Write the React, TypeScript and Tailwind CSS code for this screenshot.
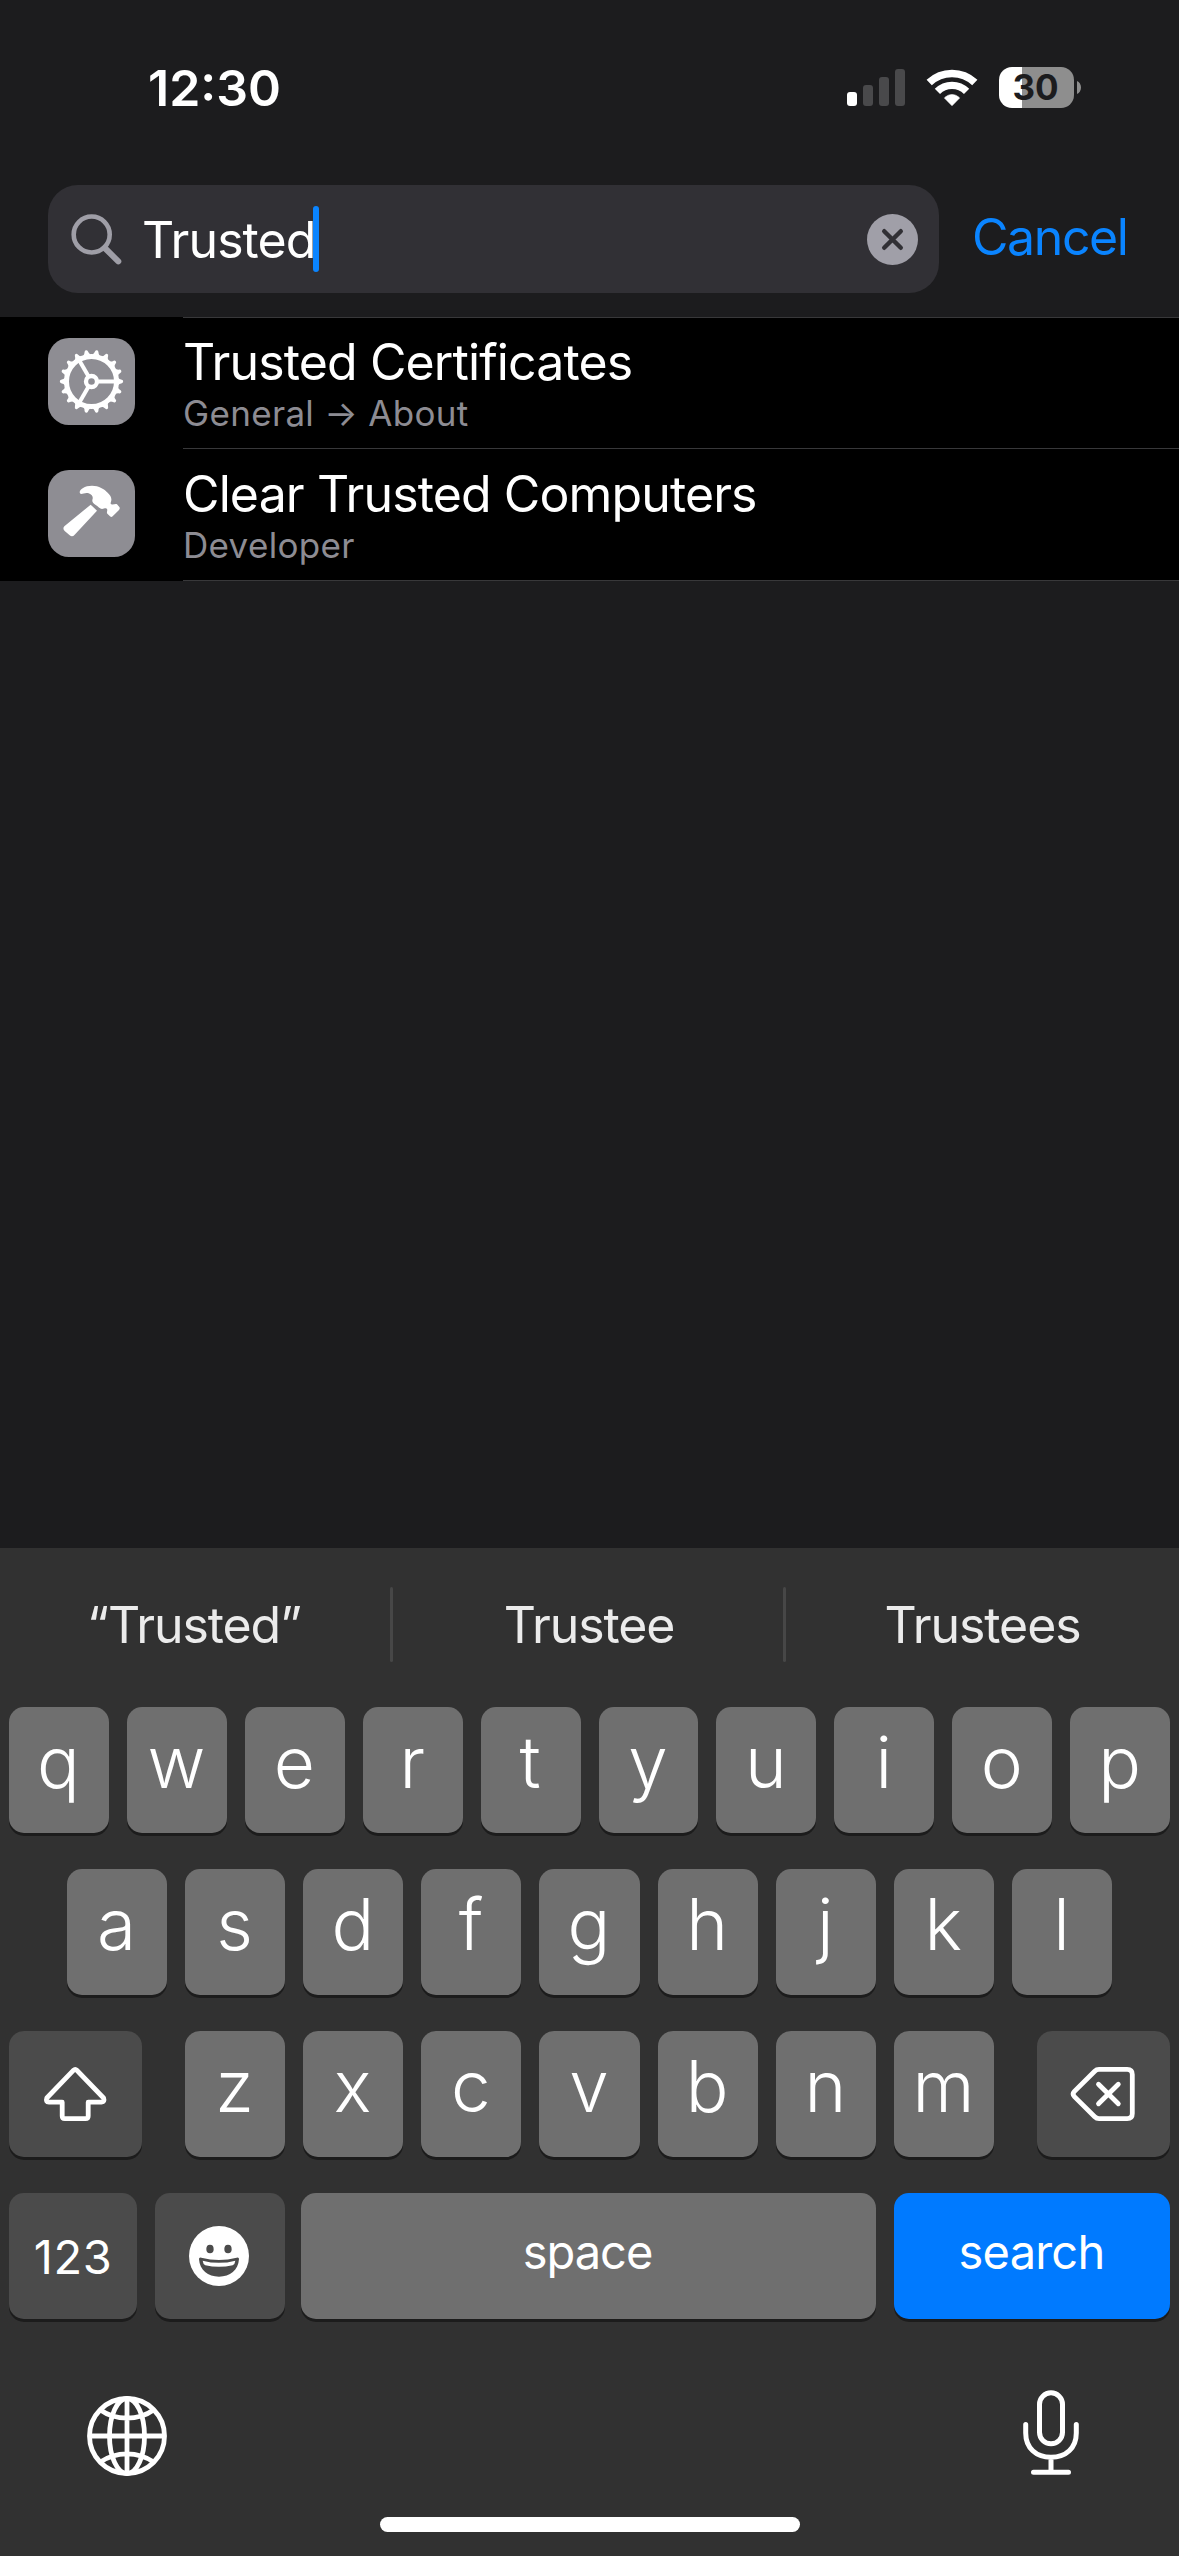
import type { ReactNode } from 'react';

function SignalBars() {
  return (
    <div className="flex h-[37px] items-end gap-[6px]">
      <div className="h-[14px] w-[10px] rounded-[3px] bg-white" />
      <div className="h-[21px] w-[10px] rounded-[3px] bg-[#49494b]" />
      <div className="h-[29px] w-[10px] rounded-[3px] bg-[#49494b]" />
      <div className="h-[37px] w-[10px] rounded-[3px] bg-[#49494b]" />
    </div>
  );
}

function WifiIcon() {
  return (
    <svg width="52" height="37" viewBox="0 0 52 37" fill="none">
      <path d="M3.2 13.6A33.2 33.2 0 0 1 48.8 13.6" stroke="#fff" strokeWidth="7.6" />
      <path d="M11.4 22.4A20.6 20.6 0 0 1 40.6 22.4" stroke="#fff" strokeWidth="7.4" />
      <path d="M26 36.8L18.3 28.9Q21.6 25.4 26 25.4T33.7 28.9Z" fill="#fff" stroke="#fff" strokeWidth="0.5" strokeLinejoin="round" />
    </svg>
  );
}

function Battery() {
  return (
    <div className="flex items-center gap-[3px]">
      <div className="flex h-[41px] w-[75px] items-center justify-center rounded-[13px] bg-[linear-gradient(to_right,#fff_23px,#8e8e8e_23px)] pr-[2px] text-[35px] leading-none font-[650] text-[#1c1c1e]">
        <span>30</span>
      </div>
      <svg width="4" height="13" viewBox="0 0 4 13">
        <path d="M0 0C2.5 1 4 3.6 4 6.5S2.5 12 0 13Z" fill="#8e8e8e" />
      </svg>
    </div>
  );
}

function MagnifierIcon() {
  return (
    <svg width="51" height="51" viewBox="0 0 51 51" fill="none" stroke="#9f9ea7" strokeLinecap="round">
      <circle cx="20.7" cy="20.5" r="18" strokeWidth="4.6" />
      <path d="M33.8 34L47.3 47.4" strokeWidth="6" />
    </svg>
  );
}

function ClearIcon() {
  return (
    <svg width="51" height="51" viewBox="0 0 51 51">
      <circle cx="25.5" cy="25.5" r="25.5" fill="#a09fa8" />
      <path d="M17.2 17.2L33.8 33.8M33.8 17.2L17.2 33.8" stroke="#313035" strokeWidth="4.4" strokeLinecap="round" />
    </svg>
  );
}

const toothAngles = Array.from({ length: 18 }, (_, i) => i * 20);

function GearIcon() {
  return (
    <svg width="87" height="87" viewBox="-130.5 -130.5 261 261">
      <g fill="none" stroke="#fff">
        <circle r="75" strokeWidth="15" />
        <circle r="16.5" strokeWidth="13" />
        {[0, 120, 240].map((a) => (
          <path key={a} d="M20 0H72" strokeWidth="12" transform={`rotate(${a})`} />
        ))}
      </g>
      {toothAngles.map((a) => (
        <path key={a} d="M78 -13Q84 -6 91 -5Q95 -4 95 0Q95 4 91 5Q84 6 78 13Z" fill="#fff" transform={`rotate(${a})`} />
      ))}
    </svg>
  );
}

function HammerIcon() {
  return (
    <svg width="87" height="87" viewBox="144 510 261 261" fill="#fff">
      <path d="M272 614L291 632L224 704Q217 712 209 706L194 693Q187 686 193 679Z" />
      <path d="M239 577C239 568 254 557 276 557C297 557 313 567 323 578C331 586 335 592 334 601C333 608 330 611 334 613C340 616 346 610 351 613L358 621Q361 625 357 630L338 649Q334 653 330 649L322 641C318 635 325 630 320 626C316 623 312 627 306 627C300 626 294 619 286 614C278 609 275 604 278 596C279 589 276 584 266 580C256 577 250 582 244 582Q239 582 239 577Z" />
    </svg>
  );
}

function ShiftIcon() {
  return (
    <svg width="65" height="56" viewBox="0 0 65 56" fill="none" stroke="#fff" strokeWidth="4.8" strokeLinejoin="round">
      <path d="M30.6 4.2Q32.2 2.6 33.8 4.2L60.6 32Q62 36 58.5 36.2H45.2V50Q45.2 52.6 42.6 52.6H21.8Q19.2 52.6 19.2 50V36.2H6Q2.4 36 3.8 32Z" />
    </svg>
  );
}

function DeleteIcon() {
  return (
    <svg width="66" height="56" viewBox="0 0 66 56" fill="none" stroke="#fff" strokeWidth="4.8" strokeLinecap="round" strokeLinejoin="round">
      <path d="M29 3.4H57.2Q62.3 3.4 62.3 8.5V47.5Q62.3 52.6 57.2 52.6H29Q26.5 52.6 24.7 50.8L4.4 30.6Q1.9 28 4.4 25.4L24.7 5.2Q26.5 3.4 29 3.4Z" />
      <path d="M28.5 18.2L48.3 37.8M48.3 18.2L28.5 37.8" />
    </svg>
  );
}

function EmojiIcon() {
  return (
    <svg width="60" height="60" viewBox="27 33 180 180">
      <circle cx="117" cy="123" r="90" fill="#fff" />
      <ellipse cx="90" cy="102" rx="11" ry="13" fill="#4b4b4b" />
      <ellipse cx="144" cy="102" rx="11" ry="13" fill="#4b4b4b" />
      <path d="M57 132Q57 126 64 128Q117 142 170 128Q177 126 177 132C175 165 150 185 117 185S59 165 57 132Z" fill="#4b4b4b" />
      <path d="M68 137Q117 150 166 137Q165 147 158 151Q117 160 76 151Q69 147 68 137Z" fill="#fff" />
    </svg>
  );
}

function GlobeIcon() {
  return (
    <svg width="80" height="80" viewBox="-40 -40 80 80" fill="none" stroke="#fff" strokeWidth="4.8">
      <circle r="37.5" />
      <ellipse rx="17.5" ry="37.5" />
      <path d="M0 -38V38M-38 0H38M-26.5 -26Q-15 -17.8 0 -17.8T26.5 -26M-26.5 26Q-15 17.8 0 17.8T26.5 26" />
    </svg>
  );
}

function MicIcon() {
  return (
    <svg width="56" height="86" viewBox="0 0 56 86" fill="none" stroke="#fff" strokeWidth="5" strokeLinecap="round">
      <rect x="16.5" y="2.8" width="23" height="51" rx="11.5" />
      <path d="M2.7 34.5V43C2.7 58 13 67.2 28 67.2S53.3 58 53.3 43V34.5M28 67.5V82M10.5 82.3H45.5" />
    </svg>
  );
}

function ResultRow({ icon, title, subtitle }: { icon: ReactNode; title: string; subtitle: string }) {
  return (
    <div className="flex h-[132px] pl-12">
      <div className="mt-[21px] h-[87px] w-[87px] shrink-0 rounded-[21px] bg-[#8e8d93]">{icon}</div>
      <div className="ml-12 flex-1 border-b border-[#38383a] pt-[15px]">
        <div className="text-[50px] leading-[60px] tracking-[-0.88px] text-white">{title}</div>
        <div className="text-[35px] leading-[42px] tracking-[0.32px] text-[#8d8c93]">{subtitle}</div>
      </div>
    </div>
  );
}

function Key({ children, className }: { children: ReactNode; className: string }) {
  return (
    <div className={`flex h-[126px] items-center justify-center rounded-[15px] text-white shadow-[0_3px_0_#1c1c1c] ${className}`}>
      {children}
    </div>
  );
}

function Letters({ letters }: { letters: string }) {
  return (
    <div className="flex flex-1 gap-[18px]">
      {letters.split('').map((l) => (
        <Key key={l} className="flex-1 basis-0 bg-[#6f6f6f] pr-[1px] pb-4 text-[71px] leading-none font-[340]">
          {l}
        </Key>
      ))}
    </div>
  );
}

function Keyboard() {
  return (
    <div className="flex h-[1008px] flex-col bg-[#313131]">
      <div className="flex h-[159px] items-center pb-[6px] text-center text-[50px] leading-[60px] tracking-[-1.1px] text-[#ebebeb]">
        <div className="w-[390px] pr-[2px]">“Trusted”</div>
        <div className="h-[75px] w-[3px] rounded-full bg-[#474747]" />
        <div className="w-[390px] pl-[2px]">Trustee</div>
        <div className="h-[75px] w-[3px] rounded-full bg-[#474747]" />
        <div className="flex-1">Trustees</div>
      </div>
      <div className="flex flex-col gap-9 px-[9px]">
        <div className="flex">
          <Letters letters="qwertyuiop" />
        </div>
        <div className="flex px-[58px]">
          <Letters letters="asdfghjkl" />
        </div>
        <div className="flex gap-[43px]">
          <Key className="w-[133px] bg-[#4b4b4b] pr-[1px]">
            <ShiftIcon />
          </Key>
          <Letters letters="zxcvbnm" />
          <Key className="w-[133px] bg-[#4b4b4b] pr-[1px]">
            <DeleteIcon />
          </Key>
        </div>
        <div className="flex text-[47px] leading-none">
          <Key className="w-[128px] bg-[#4b4b4b] tracking-[0.6px]">123</Key>
          <Key className="ml-[18px] w-[130px] bg-[#4b4b4b] pr-[2px]">
            <EmojiIcon />
          </Key>
          <Key className="ml-4 w-[575px] bg-[#6f6f6f] pr-[2px] pb-[9px] tracking-[-1px]">space</Key>
          <Key className="ml-[18px] flex-1 bg-[#007aff] pr-[1px] pb-[9px] tracking-[-0.8px]">search</Key>
        </div>
      </div>
      <div className="flex flex-1 items-start justify-between pr-[100px] pl-[87px]">
        <div className="mt-[77px]">
          <GlobeIcon />
        </div>
        <div className="mt-[71px]">
          <MicIcon />
        </div>
      </div>
      <div className="mb-6 h-[15px] w-[420px] self-center rounded-full bg-white" />
    </div>
  );
}

export default function App() {
  return (
    <div className="flex h-[2556px] w-[1179px] flex-col overflow-hidden bg-[#1c1c1e] font-['Inter',sans-serif]">
      <div className="flex h-[175px] items-center pr-[98px] pl-[148px]">
        <div className="text-[50px] leading-[60px] font-semibold text-white">12:30</div>
        <div className="ml-auto flex items-center gap-[21px]">
          <SignalBars />
          <WifiIcon />
          <Battery />
        </div>
      </div>
      <div className="mt-[10px] flex h-[108px] items-center pl-12">
        <div className="flex h-[108px] w-[891px] items-center rounded-[30px] bg-[#313035] pr-[21px] pl-[23px]">
          <MagnifierIcon />
          <div className="ml-5 pt-[2px] text-[50px] leading-[60px] tracking-[-0.9px] text-white">Trusted</div>
          <div className="-ml-[3px] h-[66px] w-[6px] rounded-full bg-[#0a84ff]" />
          <div className="ml-auto">
            <ClearIcon />
          </div>
        </div>
        <div className="ml-[33px] pb-1 text-[50px] leading-[60px] tracking-[-1.4px] text-[#0a84ff]">Cancel</div>
      </div>
      <div className="mt-6 bg-black">
        <div className="-mb-px ml-[183px] h-px bg-[#38383a]" />
        <ResultRow icon={<GearIcon />} title="Trusted Certificates" subtitle="General → About" />
        <ResultRow icon={<HammerIcon />} title="Clear Trusted Computers" subtitle="Developer" />
      </div>
      <div className="flex-1" />
      <Keyboard />
    </div>
  );
}
